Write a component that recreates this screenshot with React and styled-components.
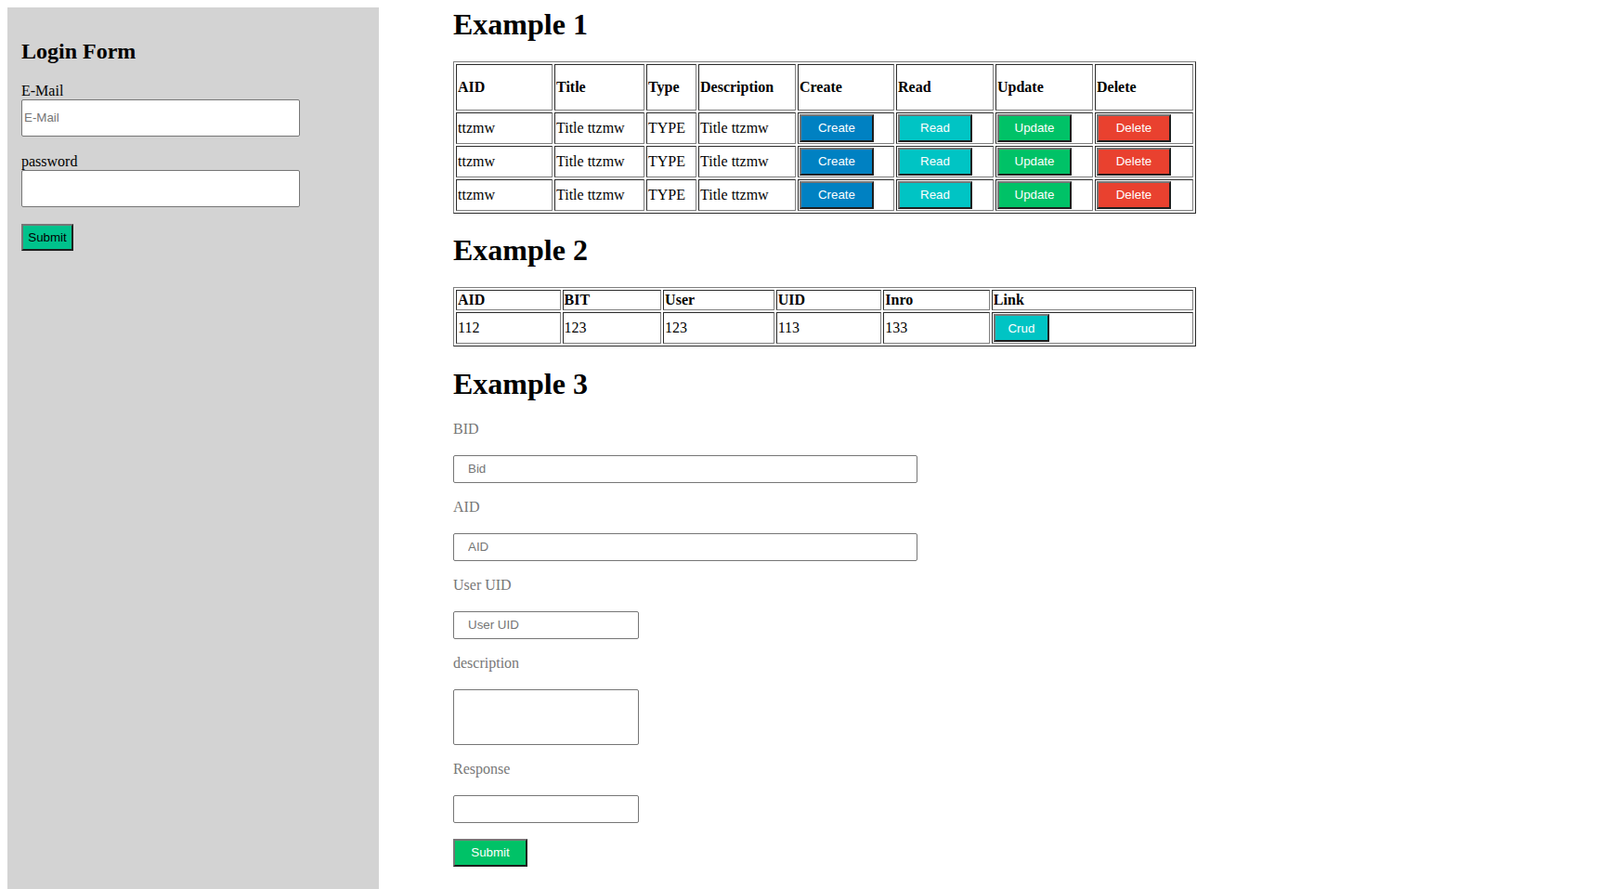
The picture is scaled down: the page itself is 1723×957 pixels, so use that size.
import React from 'react';
import styled, { createGlobalStyle } from 'styled-components';

const GlobalStyle = createGlobalStyle`
  html, body { padding: 0; }
  body {
    margin: 8px 8px 0;
    font-family: "Liberation Serif", "Times New Roman", serif;
    font-size: 16px;
    color: #000;
    background: #fff;
  }
`;

const LIGHT = '#808080';
const DARK = '#2b2b2b';

const Page = styled.div`
  display: flex;
  align-items: flex-start;
`;

const Sidebar = styled.aside`
  width: 400px;
  height: calc(100vh - 8px);
  box-sizing: border-box;
  background: #d3d3d3;
  padding: 14px 15px;
  flex-shrink: 0;
`;

const SideTitle = styled.h2`
  font-size: 24px;
  font-weight: bold;
  margin: 0.83em 0;
`;

const SideLabel = styled.label`
  display: block;
  line-height: 18px;
`;

const SideInput = styled.input`
  display: block;
  box-sizing: border-box;
  width: 300px;
  height: 40px;
  margin: 0 0 18px;
  padding: 1px 2px;
  border: 1px solid #767676;
  border-radius: 2px;
  background: #fff;
  font-family: "Liberation Sans", Arial, sans-serif;
  font-size: 13.33px;
  &::placeholder { color: #757575; }
`;

const Button = styled.button`
  display: block;
  box-sizing: border-box;
  width: ${p => p.$w || 80}px;
  height: ${p => p.$h || 30}px;
  padding: 0;
  border: 2px solid;
  border-color: #767676 #1e1e1e #1e1e1e #767676;
  background: ${p => p.$bg};
  color: ${p => p.$fg || '#fff'};
  font-family: "Liberation Sans", Arial, sans-serif;
  font-size: 13.33px;
  text-align: center;
  cursor: pointer;
`;

const Main = styled.main`
  margin-left: 80px;
`;

const Heading = styled.h1`
  font-size: 32px;
  line-height: 36.5px;
  font-weight: bold;
  margin: 21.44px 0;
  &:first-child { margin-top: 0; }
`;

const Table = styled.table`
  width: 800px;
  table-layout: fixed;
  border-collapse: separate;
  border-spacing: 2px;
  border: 1px solid;
  border-color: ${LIGHT} ${DARK} ${DARK} ${LIGHT};
`;

const HeadCell = styled.th`
  box-sizing: border-box;
  width: ${p => p.$w}px;
  height: ${p => (p.$tall ? '50px' : 'auto')};
  padding: 1px;
  border: 1px solid;
  border-color: ${DARK} ${LIGHT} ${LIGHT} ${DARK};
  text-align: left;
  vertical-align: middle;
  font-weight: bold;
  font-size: 16px;
`;

const Cell = styled.td`
  box-sizing: border-box;
  height: 34px;
  padding: 1px;
  border: 1px solid;
  border-color: ${DARK} ${LIGHT} ${LIGHT} ${DARK};
  text-align: left;
  vertical-align: middle;
  font-size: 16px;
`;

const Form = styled.form`
  display: flex;
  flex-direction: column;
  align-items: flex-start;
`;

const FieldLabel = styled.label`
  display: block;
  color: #777;
  line-height: 18px;
  margin-bottom: 19px;
`;

const FieldInput = styled.input`
  display: block;
  box-sizing: border-box;
  width: ${p => p.$w}px;
  height: 30px;
  margin: 0 0 17px;
  padding: 0 15px;
  border: 1px solid #767676;
  border-radius: 2px;
  background: #fff;
  font-family: "Liberation Sans", Arial, sans-serif;
  font-size: 13.33px;
  color: #000;
  &::placeholder { color: #757575; }
`;

const FieldArea = styled.textarea`
  display: block;
  box-sizing: border-box;
  width: 200px;
  height: 60px;
  margin: 0 0 17px;
  padding: 2px;
  border: 1px solid #767676;
  border-radius: 2px;
  resize: none;
  font-family: "Liberation Mono", monospace;
  font-size: 13.33px;
`;

const COLORS = {
  create: '#0081c2',
  read: '#00c4c4',
  update: '#00c267',
  delete: '#e9412f',
  login: '#00c28c',
};

const t1Cols = [
  ['AID', 104], ['Title', 97], ['Type', 54], ['Description', 105],
  ['Create', 104], ['Read', 105], ['Update', 105], ['Delete', 106],
];
const t2Cols = [
  ['AID', 112], ['BIT', 106], ['User', 119], ['UID', 113], ['Inro', 114], ['Link', 216],
];

const rows = [0, 1, 2];

export default function App() {
  return (
    <>
      <GlobalStyle />
      <Page>
        <Sidebar>
          <SideTitle>Login Form</SideTitle>
          <SideLabel htmlFor="email">E-Mail</SideLabel>
          <SideInput id="email" type="text" placeholder="E-Mail" />
          <SideLabel htmlFor="pw">password</SideLabel>
          <SideInput id="pw" type="password" />
          <Button type="button" $w={56} $h={29} $bg={COLORS.login} $fg="#000">Submit</Button>
        </Sidebar>
        <Main>
          <Heading>Example 1</Heading>
          <Table>
            <thead>
              <tr>
                {t1Cols.map(([name, w]) => (
                  <HeadCell key={name} $w={w} $tall>{name}</HeadCell>
                ))}
              </tr>
            </thead>
            <tbody>
              {rows.map(i => (
                <tr key={i}>
                  <Cell>ttzmw</Cell>
                  <Cell>Title ttzmw</Cell>
                  <Cell>TYPE</Cell>
                  <Cell>Title ttzmw</Cell>
                  <Cell><Button type="button" $bg={COLORS.create}>Create</Button></Cell>
                  <Cell><Button type="button" $bg={COLORS.read}>Read</Button></Cell>
                  <Cell><Button type="button" $bg={COLORS.update}>Update</Button></Cell>
                  <Cell><Button type="button" $bg={COLORS.delete}>Delete</Button></Cell>
                </tr>
              ))}
            </tbody>
          </Table>

          <Heading>Example 2</Heading>
          <Table>
            <thead>
              <tr>
                {t2Cols.map(([name, w]) => (
                  <HeadCell key={name} $w={w}>{name}</HeadCell>
                ))}
              </tr>
            </thead>
            <tbody>
              <tr>
                <Cell>112</Cell>
                <Cell>123</Cell>
                <Cell>123</Cell>
                <Cell>113</Cell>
                <Cell>133</Cell>
                <Cell><Button type="button" $w={60} $bg={COLORS.read}>Crud</Button></Cell>
              </tr>
            </tbody>
          </Table>

          <Heading>Example 3</Heading>
          <Form onSubmit={e => e.preventDefault()}>
            <FieldLabel htmlFor="bid">BID</FieldLabel>
            <FieldInput id="bid" $w={500} placeholder="Bid" />
            <FieldLabel htmlFor="aid">AID</FieldLabel>
            <FieldInput id="aid" $w={500} placeholder="AID" />
            <FieldLabel htmlFor="uid">User UID</FieldLabel>
            <FieldInput id="uid" $w={200} placeholder="User UID" />
            <FieldLabel htmlFor="desc">description</FieldLabel>
            <FieldArea id="desc" />
            <FieldLabel htmlFor="resp">Response</FieldLabel>
            <FieldInput id="resp" $w={200} />
            <Button type="submit" $bg={COLORS.update}>Submit</Button>
          </Form>
        </Main>
      </Page>
    </>
  );
}
